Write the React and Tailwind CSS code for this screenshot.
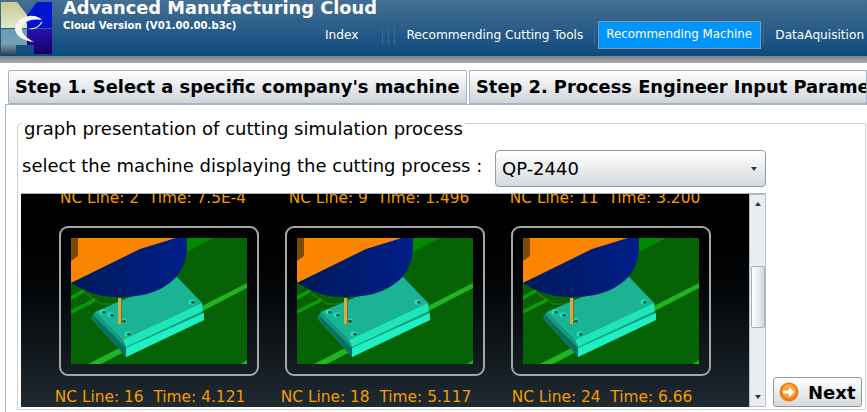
const Logo = () => (
  <svg width="51" height="52" viewBox="0 0 51 52" className="ml-px mt-0.5 shrink-0">
    <defs>
      <linearGradient id="tl" x1="0" y1="0" x2="0" y2="1"><stop offset="0" stopColor="#c5cc92" /><stop offset="1" stopColor="#e6e8cc" /></linearGradient>
      <linearGradient id="bl" x1="0" y1="0" x2="0" y2="1"><stop offset="0" stopColor="#6b9ab5" /><stop offset="0.6" stopColor="#78a0b5" /><stop offset="1" stopColor="#3c4650" /></linearGradient>
      <linearGradient id="br" x1="0" y1="0" x2="0" y2="1"><stop offset="0" stopColor="#2c10b8" /><stop offset="1" stopColor="#140060" /></linearGradient>
    </defs>
    <path d="M0 0H16L26 13V26H0Z" fill="url(#tl)" />
    <path d="M26 13L36 0H51V26H26Z" fill="#0514cc" />
    <path d="M0 27H26V43H15V52H0Z" fill="url(#bl)" />
    <path d="M26 27H51V52H33V43H26Z" fill="url(#br)" />
    <ellipse cx="33" cy="19" rx="8" ry="6" fill="#0514cc" />
    <path d="M41 18C33 10 18 14 14 25C13 33 22 39 33 40C26 36 20 32 21 26C22 19 32 16 41 18Z" fill="#f4f6f4" />
    <path d="M41 20C38 25 34 27 29 27" fill="none" stroke="#e8ecf0" strokeWidth="1.2" />
  </svg>
)

const Hole = ({ x, y }) => (
  <g>
    <ellipse cx={x} cy={y} rx="3.5" ry="2.5" fill="#1ee6b8" />
    <ellipse cx={x + 1} cy={y + 0.3} rx="2" ry="1.5" fill="#0b5a4c" />
  </g>
)

const Scene = () => (
  <svg width="176" height="126" viewBox="0 0 176 126" className="block">
    <defs>
      <linearGradient id="spindle" x1="0" y1="0" x2="1" y2="0"><stop offset="0" stopColor="#001a58" /><stop offset="1" stopColor="#001e8a" /></linearGradient>
    </defs>
    <rect width="176" height="126" fill="#056205" />
    <path d="M116 0H143L116 14Z" fill="#008a00" />
    <path d="M0 58L14 50V54L0 62Z" fill="#0a9a0a" />
    <path d="M0 72L24 60V64L0 76Z" fill="#0a9a0a" />
    <path d="M17 126L176 45V50L30 126Z" fill="#22b322" />
    <path d="M170 126L176 122V126Z" fill="#22b322" />
    <path d="M14 55L30 66H60" fill="none" stroke="#8a9a10" strokeWidth="0.5" />
    <path d="M0 45V0H105L70 12Z" fill="#fb8500" />
    <path d="M0 0H7V18L0 23Z" fill="#7a4a08" />
    <path d="M24 74L106 39L131 65L133 82L55 119L20 80Z" fill="#0f9a80" />
    <path d="M24 74L106 39L131 65L52 102Z" fill="#1ab394" />
    <path d="M52 102L131 65L132 73L55 109Z" fill="#1ee6b8" />
    <path d="M55 110L133 75V82L55 119Z" fill="#1ef0c4" />
    <path d="M24 74L52 102L55 109L23 79Z" fill="#139a80" />
    <path d="M20 79L23 78L55 110V119Z" fill="#0b7060" />
    <path d="M0 45C20 58 40 60 54 59C85 58 105 45 112 28C116 20 116 10 116 0H105L69 11Z" fill="url(#spindle)" />
    <Hole x={32} y={74} />
    <Hole x={40} y={77} />
    <Hole x={52} y={83} />
    <Hole x={57} y={96} />
    <Hole x={121} y={64} />
    <rect x="47" y="60" width="4" height="26" fill="#c9b04a" />
    <rect x="50" y="60" width="1" height="26" fill="#7d6a20" />
  </svg>
)

const Label = ({ text }) => (
  <p className="w-[226px] shrink-0 text-center text-[15.4px] leading-[18px] text-[#f59c00] whitespace-pre">{text}</p>
)

const Card = () => (
  <div className="w-[200px] shrink-0 rounded-[9px] border-2 border-[#a6a6a6] p-[10px]">
    <Scene />
  </div>
)

const topLabels = ["NC Line: 2  Time: 7.5E-4", "NC Line: 9  Time: 1.496", "NC Line: 11  Time: 3.200"]
const bottomLabels = ["NC Line: 16  Time: 4.121", "NC Line: 18  Time: 5.117", "NC Line: 24  Time: 6.66"]

const App = () => {
  const navItems = ["Recommending Cutting Tools", "Recommending Machine", "DataAquisition"]

  return (
    <div className="h-[412px] w-[867px] overflow-hidden bg-white font-['DejaVu_Sans',sans-serif] text-black">
      <header className="flex h-[56px] overflow-hidden bg-gradient-to-b from-[#446f92] to-[#0a4a7f] text-white">
        <Logo />
        <div className="ml-[11px] w-[262px] shrink-0 whitespace-nowrap">
          <h1 className="-mt-[3px] text-[17.8px] leading-[22px] font-bold">Advanced Manufacturing Cloud</h1>
          <p className="mt-px text-[10.15px] leading-[12px] font-bold">Cloud Version (V01.00.00.b3c)</p>
        </div>
        <nav className="mt-[21px] flex h-[28px] items-center whitespace-nowrap text-[12.15px]">
          <span>Index</span>
          <span className="mr-[11px] ml-[24px] flex h-[19px] gap-[5px]">
            <i className="w-px bg-[#3a6a90]" /><i className="w-px bg-[#3a6a90]" /><i className="w-px bg-[#3a6a90]" />
          </span>
          <span>{navItems[0]}</span>
          <i className="mr-[3px] ml-[11px] h-[19px] w-px bg-[#3a6a90]" />
          <span className="flex h-[28px] w-[163px] shrink-0 items-center border border-[#7d9ab3] bg-[#0095fb] pl-[7px] text-[11.85px]">{navItems[1]}</span>
          <i className="mr-[11px] ml-[2px] h-[19px] w-px bg-[#3a6a90]" />
          <span>{navItems[2]}</span>
        </nav>
      </header>
      <div className="h-[7px] bg-gradient-to-b from-[#7f8284] to-[#a9abad]" />

      <div className="ml-[8px] mt-[7px] flex h-[34px] items-stretch gap-[2px] whitespace-nowrap text-[17.85px] font-bold">
        <div className="flex w-[459px] shrink-0 items-center overflow-hidden rounded-t-[2px] border border-[#a7b1c4] bg-gradient-to-b from-white to-[#cfd3d9] pl-[6px]">
          Step 1. Select a specific company's machine
        </div>
        <div className="flex flex-1 items-center overflow-hidden border border-[#a7b1c4] bg-gradient-to-b from-white to-[#cfd3d9] pl-[6px]">
          Step 2. Process Engineer Input Parameters
        </div>
      </div>

      <main className="ml-[5px] h-[308px] border-t border-l border-[#a7b1c4] pt-[18px] pl-[11px]">
        <section className="relative h-[287px] w-[849px] rounded-tl-[4px] border border-[#cfd3d6] pl-[3px]">
          <h2 className="absolute -top-[5px] left-[4px] whitespace-nowrap bg-white px-[2px] text-[18px] leading-[20px]">graph presentation of cutting simulation process</h2>
          <div className="mt-[26px] flex h-[37px] items-center whitespace-nowrap text-[18px]">
            <span className="w-[474px] shrink-0 pb-[6px] pl-px">select the machine displaying the cutting process :</span>
            <div className="flex h-[37px] w-[271px] shrink-0 items-center justify-between rounded-[4px] border border-[#8d9aa5] bg-gradient-to-b from-white to-[#d5d9dc] px-[6px]">
              QP-2440
              <span className="mr-[2px] border-x-[3.5px] border-t-[4px] border-x-transparent border-t-[#333]" />
            </div>
          </div>
          <div className="mt-[6px] flex items-end">
            <div className="flex h-[214px] w-[745px] shrink-0 border-t border-[#a7b1bb]">
              <div className="h-full w-[728px] shrink-0 overflow-hidden bg-gradient-to-b from-black to-[#1f2a31] pl-[38px]">
                <div className="-ml-[19px] -mt-[5px] flex">
                  {topLabels.map((t) => <Label key={t} text={t} />)}
                </div>
                <div className="mt-[19px] flex gap-[26px]">
                  <Card /><Card /><Card />
                </div>
                <div className="-ml-[22px] mt-[12px] flex">
                  {bottomLabels.map((t) => <Label key={t} text={t} />)}
                </div>
              </div>
              <div className="relative flex h-full w-[17px] shrink-0 flex-col items-center justify-between rounded-r-[2px] border border-[#b4bec8] bg-[#e9edf1] py-[7px]">
                <span className="border-x-[3.5px] border-b-[4px] border-x-transparent border-b-[#333]" />
                <span className="absolute top-[71px] left-px h-[62px] w-[14px] rounded-[2px] border border-[#a7b1bb] bg-gradient-to-r from-white to-[#d5d9dc]" />
                <span className="border-x-[3.5px] border-t-[4px] border-x-transparent border-t-[#333]" />
              </div>
            </div>
            <button className="ml-[7px] flex h-[30px] w-[89px] shrink-0 items-center gap-[9px] rounded-[3px] border border-[#8d9aa5] bg-gradient-to-b from-white to-[#d5d9dc] pl-[5px] text-[18px] font-bold">
              <svg width="20" height="20" viewBox="0 0 20 20" className="shrink-0">
                <circle cx="10" cy="10" r="9.5" fill="#f07a10" />
                <circle cx="10" cy="9" r="7" fill="#fba63a" />
                <path d="M4 8.5H10V5L15.5 10L10 15V11.5H4Z" fill="#fff" />
              </svg>
              Next
            </button>
          </div>
        </section>
      </main>
    </div>
  )
}

export default App
